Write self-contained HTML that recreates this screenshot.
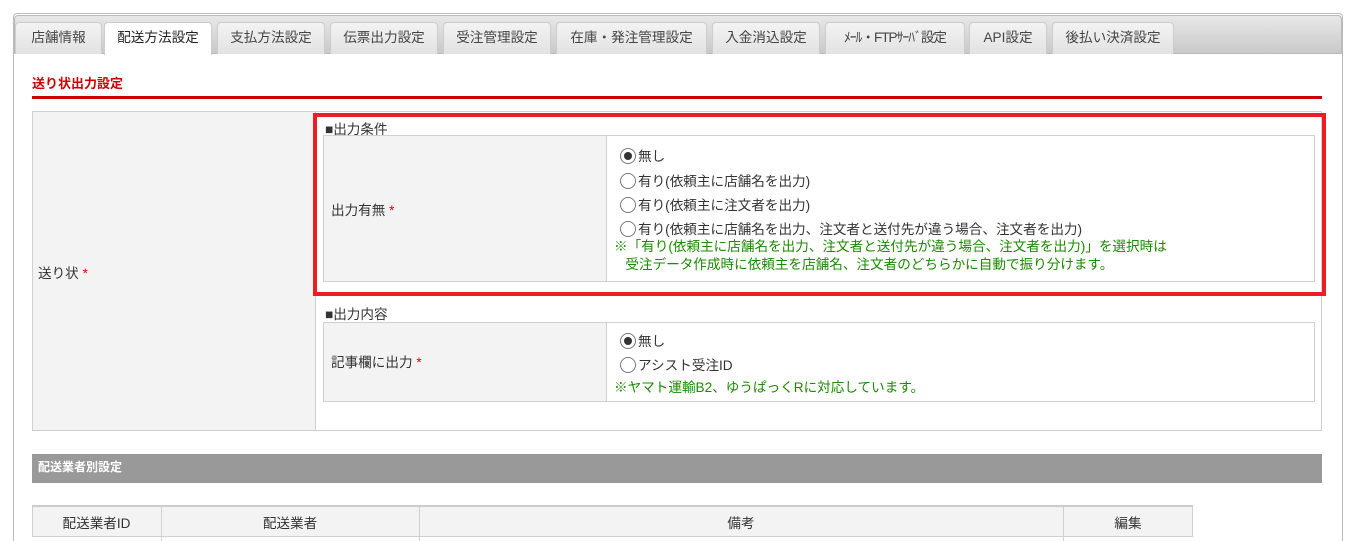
<!DOCTYPE html>
<html><head><meta charset="utf-8"><style>
*{box-sizing:border-box;margin:0;padding:0}
html,body{width:1352px;height:541px;overflow:hidden}
body{background:#fff;font-family:"Liberation Sans","Noto Sans CJK JP",sans-serif;font-size:13.6px;color:#333;position:relative}
.a{position:absolute}
.outer{left:13px;top:13px;width:1330px;height:528px;border:1px solid #bbb;border-bottom:none;border-radius:4px 4px 0 0}
.bar{left:14px;top:15px;width:1328px;height:39px;background:linear-gradient(#e8e8e8,#c9c9c9);border:1px solid #bbb;border-radius:4px 4px 0 0}
.tab{top:22px;height:32px;background:linear-gradient(#f3f3f3,#e2e2e2);border:1px solid #ccc;border-bottom:none;border-radius:4px 4px 0 0;text-align:center;line-height:30px;font-size:13.6px;color:#444}
.tab.on{background:#fff;height:33px;color:#222}
.lbl{background:#f2f3f2}
.b{border:1px solid #d0d0d0}
.r{display:inline-block;width:16px;height:16px;border:1px solid #777;border-radius:50%;vertical-align:-3px;margin-right:2px;background:#fff;position:relative}
.r.c::after{content:"";position:absolute;left:3px;top:3px;width:8px;height:8px;border-radius:50%;background:#333}
.req{color:#d00}
.g{color:#1a8a00}
</style></head><body>
<div class="a outer"></div>
<div class="a bar"></div>
<div class="a tab" style="left:15px;width:87px">店舗情報</div>
<div class="a tab on" style="left:104px;width:108px">配送方法設定</div>
<div class="a tab" style="left:217px;width:108px">支払方法設定</div>
<div class="a tab" style="left:330px;width:108px">伝票出力設定</div>
<div class="a tab" style="left:443px;width:108px">受注管理設定</div>
<div class="a tab" style="left:556px;width:151px">在庫・発注管理設定</div>
<div class="a tab" style="left:712px;width:108px">入金消込設定</div>
<div class="a tab" style="left:825px;width:140px;letter-spacing:-1px">ﾒｰﾙ・FTPｻｰﾊﾞ設定</div>
<div class="a tab" style="left:969px;width:78px">API設定</div>
<div class="a tab" style="left:1052px;width:122px">後払い決済設定</div>

<div class="a" style="left:32px;top:73px;color:#c00;font-weight:bold;font-size:13px">送り状出力設定</div>
<div class="a" style="left:32px;top:96px;width:1290px;height:3px;background:#c00"></div>

<div class="a b" style="left:32px;top:111px;width:1290px;height:320px"></div>
<div class="a lbl" style="left:33px;top:112px;width:283px;height:318px;border-right:1px solid #d0d0d0"></div>
<div class="a" style="left:38px;top:262px">送り状 <span class="req">*</span></div>

<div class="a" style="left:313px;top:113px;width:1013px;height:183px;border:4px solid #ee1c25"></div>
<div class="a" style="left:325px;top:118px">■出力条件</div>
<div class="a b" style="left:323px;top:135px;width:992px;height:147px"></div>
<div class="a lbl" style="left:324px;top:136px;width:283px;height:145px;border-right:1px solid #d0d0d0"></div>
<div class="a" style="left:331px;top:199px">出力有無 <span class="req">*</span></div>
<div class="a" style="left:620px;top:145px;line-height:24.5px">
<div><span class="r c"></span>無し</div>
<div><span class="r"></span>有り(依頼主に店舗名を出力)</div>
<div><span class="r"></span>有り(依頼主に注文者を出力)</div>
<div style="line-height:22px"><span class="r"></span>有り(依頼主に店舗名を出力、注文者と送付先が違う場合、注文者を出力)</div>
</div>
<div class="a g" style="left:614px;top:238px;line-height:18px">※「有り(依頼主に店舗名を出力、注文者と送付先が違う場合、注文者を出力)」を選択時は<br>&nbsp;&nbsp;&nbsp;受注データ作成時に依頼主を店舗名、注文者のどちらかに自動で振り分けます。</div>

<div class="a" style="left:325px;top:303px">■出力内容</div>
<div class="a b" style="left:323px;top:322px;width:992px;height:80px"></div>
<div class="a lbl" style="left:324px;top:323px;width:283px;height:78px;border-right:1px solid #d0d0d0"></div>
<div class="a" style="left:331px;top:351px">記事欄に出力 <span class="req">*</span></div>
<div class="a" style="left:620px;top:330px;line-height:24px">
<div><span class="r c"></span>無し</div>
<div><span class="r"></span>アシスト受注ID</div>
</div>
<div class="a g" style="left:614px;top:376px">※ヤマト運輸B2、ゆうぱっくRに対応しています。</div>

<div class="a" style="left:32px;top:454px;width:1290px;height:29px;background:#999;color:#fff;font-weight:bold;font-size:12px;line-height:27px;padding-left:6px">配送業者別設定</div>

<div class="a" style="left:32px;top:505px;width:1161px;height:3px;background:#ccc"></div>
<div class="a lbl" style="left:32px;top:507px;width:1161px;height:30px;border:1px solid #d0d0d0;border-top:none"></div>
<div class="a" style="left:161px;top:507px;width:1px;height:34px;background:#d0d0d0"></div>
<div class="a" style="left:419px;top:507px;width:1px;height:34px;background:#d0d0d0"></div>
<div class="a" style="left:1063px;top:507px;width:1px;height:34px;background:#d0d0d0"></div>
<div class="a" style="left:32px;top:512px;width:129px;text-align:center">配送業者ID</div>
<div class="a" style="left:161px;top:512px;width:258px;text-align:center">配送業者</div>
<div class="a" style="left:419px;top:512px;width:644px;text-align:center">備考</div>
<div class="a" style="left:1063px;top:512px;width:130px;text-align:center">編集</div>
</body></html>
